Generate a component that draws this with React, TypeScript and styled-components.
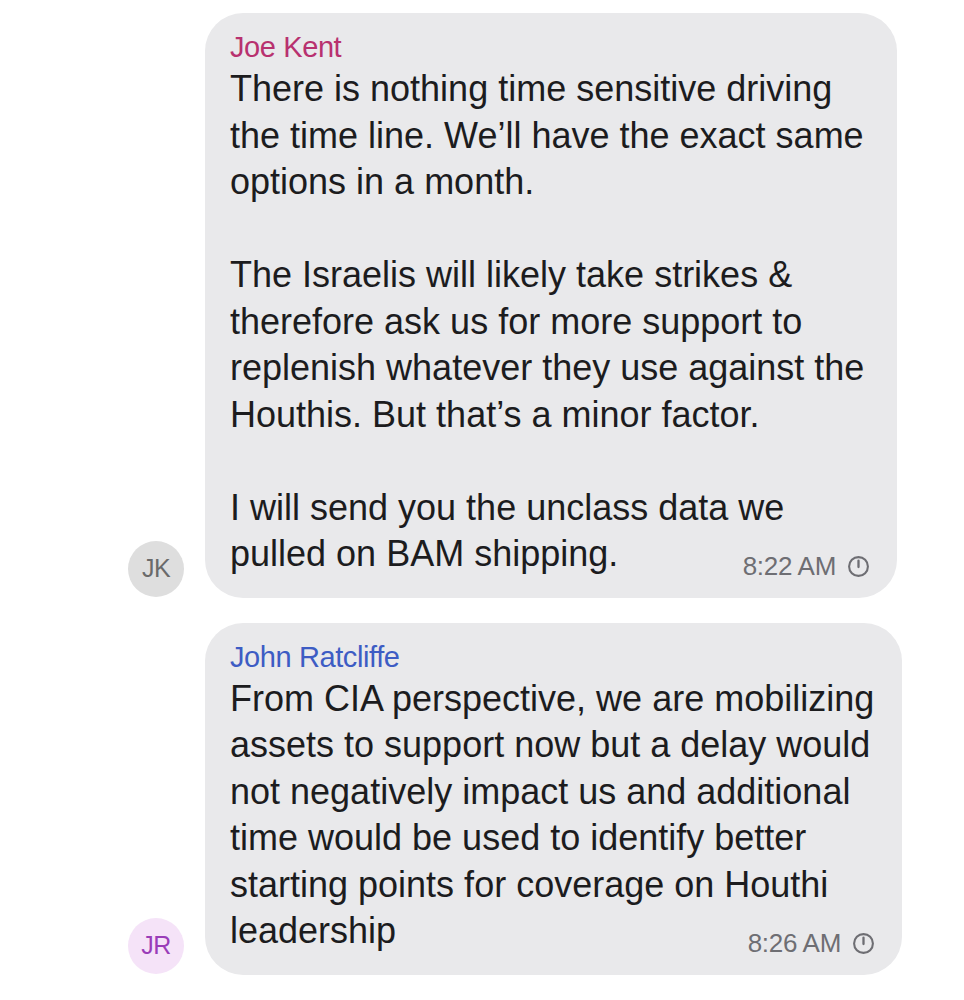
import styled, { createGlobalStyle } from 'styled-components';

const Global = createGlobalStyle`
  html, body {
    margin: 0;
    padding: 0;
    background: #ffffff;
  }
  body {
    font-family: "Liberation Sans", Arial, sans-serif;
    -webkit-font-smoothing: antialiased;
  }
`;

const Page = styled.div`
  width: 964px;
  min-height: 1000px;
  box-sizing: border-box;
  padding: 13px 0 0 128px;
  display: flex;
  flex-direction: column;
  gap: 25px;
`;

const Row = styled.div`
  display: flex;
  align-items: flex-end;
  gap: 21px;
`;

const Avatar = styled.div<{ $bg: string; $fg: string }>`
  width: 56px;
  height: 56px;
  border-radius: 50%;
  flex-shrink: 0;
  background: ${(p) => p.$bg};
  color: ${(p) => p.$fg};
  display: flex;
  align-items: center;
  justify-content: center;
  font-size: 25px;
  letter-spacing: -0.5px;
  margin-bottom: 1px;
`;

const Bubble = styled.div<{ $width: number }>`
  width: ${(p) => p.$width}px;
  box-sizing: border-box;
  background: #e9e9eb;
  border-radius: 38px;
  padding: 20px 27px 20px 25px;
`;

const Name = styled.div<{ $color: string }>`
  color: ${(p) => p.$color};
  font-size: 29px;
  line-height: 28px;
  margin-bottom: 5px;
  letter-spacing: -0.4px;
`;

const Line = styled.div`
  color: #1c1c1e;
  font-size: 36px;
  line-height: 46.5px;
  height: 46.5px;
  white-space: nowrap;
`;

const LastRow = styled.div`
  display: flex;
  align-items: flex-end;
  justify-content: space-between;
`;

const Time = styled.div`
  display: flex;
  align-items: center;
  gap: 11px;
  color: #6e6e73;
  font-size: 26px;
  letter-spacing: -0.3px;
  margin-bottom: -6px;
  height: 34px;
`;

const Pending = () => (
  <svg width="23" height="23" viewBox="0 0 22 22" fill="none">
    <circle cx="11" cy="11" r="9" stroke="#6e6e73" strokeWidth="2" />
    <path d="M11 5.5V11.5" stroke="#6e6e73" strokeWidth="2.2" strokeLinecap="round" />
  </svg>
);

type Msg = {
  initials: string;
  avatarBg: string;
  avatarFg: string;
  name: string;
  nameColor: string;
  width: number;
  lines: string[];
  time: string;
};

const messages: Msg[] = [
  {
    initials: 'JK',
    avatarBg: '#dedede',
    avatarFg: '#6a6a6a',
    name: 'Joe Kent',
    nameColor: '#b8316f',
    width: 692,
    lines: [
      'There is nothing time sensitive driving',
      'the time line. We\u2019ll have the exact same',
      'options in a month.',
      '',
      'The Israelis will likely take strikes &',
      'therefore ask us for more support to',
      'replenish whatever they use against the',
      'Houthis. But that\u2019s a minor factor.',
      '',
      'I will send you the unclass data we',
      'pulled on BAM shipping.',
    ],
    time: '8:22 AM',
  },
  {
    initials: 'JR',
    avatarBg: '#f5e3f8',
    avatarFg: '#9a3db8',
    name: 'John Ratcliffe',
    nameColor: '#3d5cc4',
    width: 697,
    lines: [
      'From CIA perspective, we are mobilizing',
      'assets to support now but a delay would',
      'not negatively impact us and additional',
      'time would be used to identify better',
      'starting points for coverage on Houthi',
      'leadership',
    ],
    time: '8:26 AM',
  },
];

export default function App() {
  return (
    <>
      <Global />
      <Page>
        {messages.map((m) => {
          const body = m.lines.slice(0, -1);
          const last = m.lines[m.lines.length - 1];
          return (
            <Row key={m.name}>
              <Avatar $bg={m.avatarBg} $fg={m.avatarFg}>
                {m.initials}
              </Avatar>
              <Bubble $width={m.width}>
                <Name $color={m.nameColor}>{m.name}</Name>
                {body.map((l, i) => (
                  <Line key={i}>{l}</Line>
                ))}
                <LastRow>
                  <Line>{last}</Line>
                  <Time>
                    {m.time}
                    <Pending />
                  </Time>
                </LastRow>
              </Bubble>
            </Row>
          );
        })}
      </Page>
    </>
  );
}
